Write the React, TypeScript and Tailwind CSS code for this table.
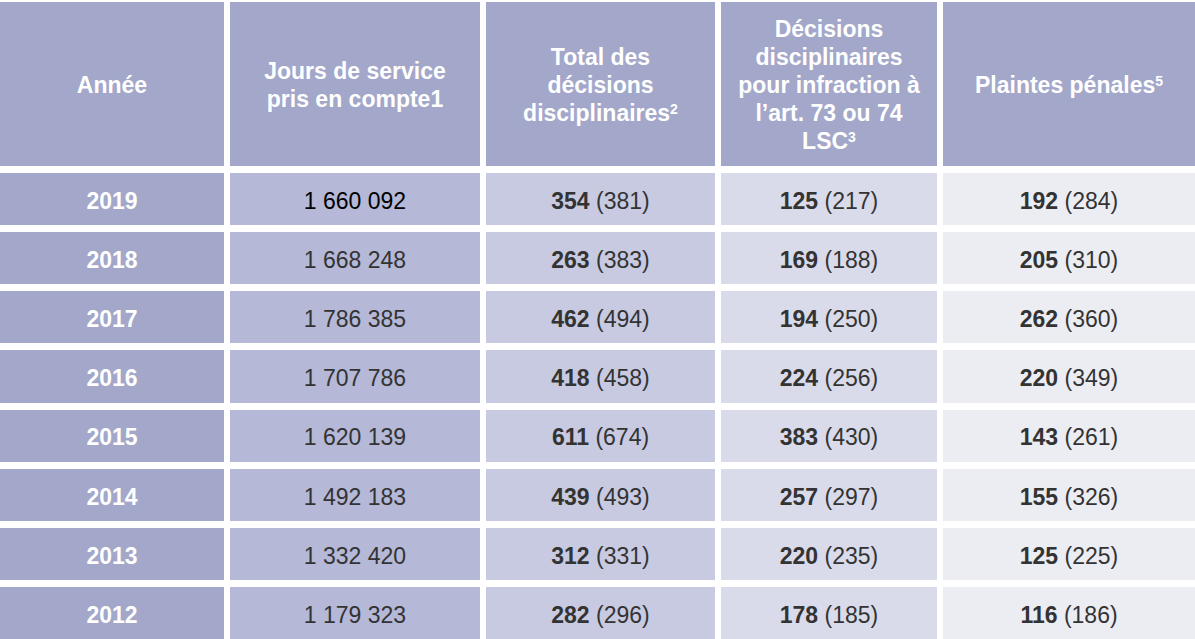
import React from "react";

const rows: [string, string, string, string, string, string, string, string][] = [
  ["2019", "1 660 092", "354", "(381)", "125", "(217)", "192", "(284)"],
  ["2018", "1 668 248", "263", "(383)", "169", "(188)", "205", "(310)"],
  ["2017", "1 786 385", "462", "(494)", "194", "(250)", "262", "(360)"],
  ["2016", "1 707 786", "418", "(458)", "224", "(256)", "220", "(349)"],
  ["2015", "1 620 139", "611", "(674)", "383", "(430)", "143", "(261)"],
  ["2014", "1 492 183", "439", "(493)", "257", "(297)", "155", "(326)"],
  ["2013", "1 332 420", "312", "(331)", "220", "(235)", "125", "(225)"],
  ["2012", "1 179 323", "282", "(296)", "178", "(185)", "116", "(186)"],
];

function Sup({ children }: { children: React.ReactNode }) {
  return <sup className="text-[14px] font-bold">{children}</sup>;
}

export default function App() {
  const head =
    "bg-[#a3a7c9] text-white font-bold flex items-center justify-center text-center leading-[28px] whitespace-nowrap pt-[2px]";
  const cell = "flex items-center justify-center h-[52.15px] pt-[4px] text-[#333333]";
  return (
    <div
      className="w-[1195px] h-[639px] bg-white overflow-hidden pt-[2px] text-[23px]"
      style={{ fontFamily: '"Liberation Sans", Arial, sans-serif' }}
    >
      <div className="grid grid-cols-[224px_250px_229px_216px_252px] gap-x-[6px] gap-y-[7px]">
        <div className={`${head} h-[164px]`}>Année</div>
        <div className={head}>
          Jours de service
          <br />
          pris en compte1
        </div>
        <div className={head}>
          <div>
            Total des
            <br />
            décisions
            <br />
            disciplinaires<Sup>2</Sup>
          </div>
        </div>
        <div className={head}>
          <div>
            Décisions
            <br />
            disciplinaires
            <br />
            pour infraction à
            <br />
            l’art. 73 ou 74
            <br />
            LSC<Sup>3</Sup>
          </div>
        </div>
        <div className={head}>
          <div>
            Plaintes pénales<Sup>5</Sup>
          </div>
        </div>
        {rows.map((r, i) => (
          <React.Fragment key={r[0]}>
            <div className={`${cell} bg-[#a3a7c9] !text-white font-bold`}>{r[0]}</div>
            <div className={`${cell} bg-[#b5b8d7] ${i === 0 ? "!text-black" : ""}`}>{r[1]}</div>
            <div className={`${cell} bg-[#c8cae1]`}>
              <span>
                <b>{r[2]}</b> {r[3]}
              </span>
            </div>
            <div className={`${cell} bg-[#dadbea]`}>
              <span>
                <b>{r[4]}</b> {r[5]}
              </span>
            </div>
            <div className={`${cell} bg-[#ececf3]`}>
              <span>
                <b>{r[6]}</b> {r[7]}
              </span>
            </div>
          </React.Fragment>
        ))}
      </div>
    </div>
  );
}
